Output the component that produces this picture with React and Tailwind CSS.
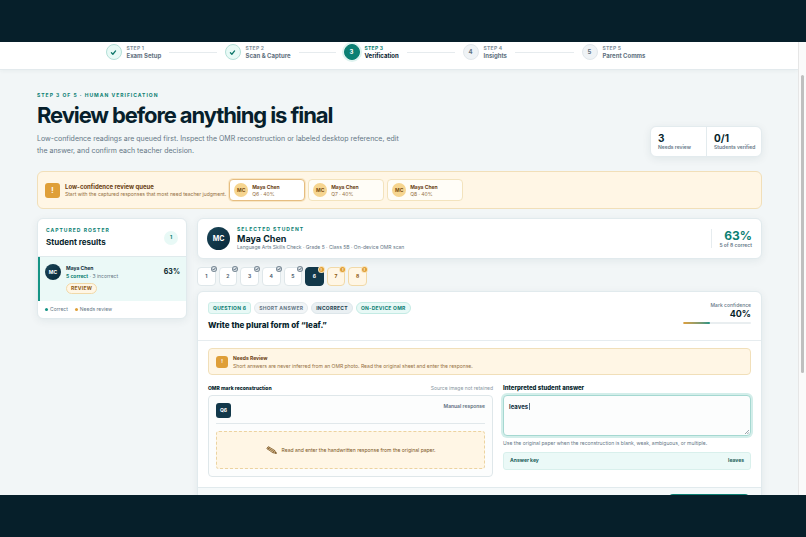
import { useState } from 'react';

const steps = [
  { id: 1, label: 'Exam Setup', state: 'done' },
  { id: 2, label: 'Scan & Capture', state: 'done' },
  { id: 3, label: 'Verification', state: 'active' },
  { id: 4, label: 'Insights', state: 'todo' },
  { id: 5, label: 'Parent Comms', state: 'todo' },
];

const stepCircle = {
  done: 'bg-[#e8faf6] border-[#b4e0d8] text-[#0b7568]',
  active: 'bg-[#0c7f73] border-[#0c7f73] text-white ring-2 ring-[#dff3f0]',
  todo: 'bg-[#eff3f6] border-[#e1e7eb] text-[#5f7180]',
};

const queue = [
  { id: 6, name: 'Maya Chen', meta: 'Q6 · 40%' },
  { id: 7, name: 'Maya Chen', meta: 'Q7 · 40%' },
  { id: 8, name: 'Maya Chen', meta: 'Q8 · 40%' },
];

const questions = [1, 2, 3, 4, 5, 6, 7, 8];

function Check({ className }) {
  return (
    <svg viewBox="0 0 10 10" className={className} fill="none" stroke="currentColor" strokeWidth="1.8" strokeLinecap="round" strokeLinejoin="round">
      <path d="M2 5.4 4.1 7.5 8 2.8" />
    </svg>
  );
}

function Pencil({ className }) {
  return (
    <svg viewBox="0 0 22 16" className={className} fill="none" stroke="currentColor" strokeWidth="1.4" strokeLinejoin="round">
      <path d="M1.5 5.2 4.6 1.2 17.2 8.6 20.6 14.6 13.8 13.6Z" fill="#d9c096" />
      <path d="M3 3.4 15.6 11M13.8 13.6 17.2 8.6M4 6.8 7 2.6" />
      <path d="m18.4 14.3 1.2-1.6 1 1.9Z" fill="currentColor" />
    </svg>
  );
}

function StepNav() {
  return (
    <nav className="bg-white border-b border-[#e3eaed] pt-[2px] pb-[9px] pl-2 shadow-[0_1px_4px_rgba(15,50,65,0.05)]">
      <ol className="grid grid-cols-5 w-full max-w-[595px] mx-auto">
        {steps.map((s, i) => (
          <li key={s.id} className="flex items-center">
            <span className={`w-4 h-4 shrink-0 rounded-full border flex items-center justify-center text-[6px] leading-none font-bold ${stepCircle[s.state]}`}>
              {s.state === 'done' ? <Check className="w-[7px] h-[7px]" /> : s.id}
            </span>
            <span className="ml-[5px] whitespace-nowrap">
              <span className={`block text-[5px] leading-[7px] font-bold tracking-wider ${s.state === 'active' ? 'text-[#0c7f73]' : 'text-[#7f8f9b]'}`}>STEP {s.id}</span>
              <span className={`block text-[6px] leading-[8px] font-bold ${s.state === 'active' ? 'text-[#0a2230]' : 'text-[#5f7180]'}`}>{s.label}</span>
            </span>
            {i < steps.length - 1 && <span className="flex-1 h-px mx-2 bg-[#e6ebee]" />}
          </li>
        ))}
      </ol>
    </nav>
  );
}

function PageHeading() {
  return (
    <header className="flex items-end justify-between">
      <div>
        <p className="text-[5px] leading-[8px] font-bold tracking-[1px] text-[#0c7f73]">STEP 3 OF 5 · HUMAN VERIFICATION</p>
        <h1 className="mt-[2px] text-[22px] leading-[28px] font-bold tracking-tighter text-[#071f2c]">Review before anything is final</h1>
        <p className="mt-[4px] max-w-[370px] text-[7px] leading-[12px] text-[#657786]">
          Low-confidence readings are queued first. Inspect the OMR reconstruction or labeled desktop reference, edit the answer, and confirm each teacher decision.
        </p>
      </div>
      <dl className="w-28 grid grid-cols-2 bg-white border border-[#e3ebee] rounded-md shadow-[0_2px_8px_rgba(15,50,65,0.08)] whitespace-nowrap">
        <div className="flex flex-col-reverse pl-[7px] py-[5px]">
          <dt className="text-[5px] leading-[7px] font-semibold text-[#657786]">Needs review</dt>
          <dd className="text-[10px] leading-[12px] font-bold text-[#071f2c]">3</dd>
        </div>
        <div className="flex flex-col-reverse pl-[7px] py-[5px] border-l border-[#e3ebee]">
          <dt className="text-[5px] leading-[7px] font-semibold text-[#657786]">Students verified</dt>
          <dd className="text-[10px] leading-[12px] font-bold text-[#071f2c]">0/1</dd>
        </div>
      </dl>
    </header>
  );
}

function ReviewQueue({ active, onSelect }) {
  return (
    <section className="mt-[14px] flex items-center px-[7px] py-[7px] rounded-md border border-[#f1dfb9] bg-[#fff6e5]">
      <span className="w-[15px] h-[15px] shrink-0 rounded-[3px] bg-[#df9f38] text-white text-[7px] font-bold leading-none flex items-center justify-center">!</span>
      <div className="ml-[5px] mr-[3px] whitespace-nowrap">
        <h2 className="text-[6px] leading-[8px] font-bold text-[#6b4114]">Low-confidence review queue</h2>
        <p className="text-[5px] leading-[6px] text-[#94703f]">Start with the captured responses that most need teacher judgment.</p>
      </div>
      <div className="flex gap-[3px]">
        {queue.map((q) => (
          <button
            key={q.id}
            type="button"
            onClick={() => onSelect(q.id)}
            className={`w-[76px] flex items-center gap-[4px] px-1 py-[3px] rounded-[4px] border text-left ${active === q.id ? 'bg-white border-[#e6bd80] ring-1 ring-[#f8e6c4]' : 'bg-[#fffdf7] border-[#f3e3bd]'}`}
          >
            <span className="w-[14px] h-[14px] rounded-full bg-[#f6d590] text-[#7a5014] text-[5px] leading-none font-bold flex items-center justify-center">MC</span>
            <span>
              <span className="block text-[5px] leading-[8px] font-bold text-[#6b4114]">{q.name}</span>
              <span className="block text-[5px] leading-[6px] text-[#94703f]">{q.meta}</span>
            </span>
          </button>
        ))}
      </div>
    </section>
  );
}

function Roster() {
  return (
    <aside className="bg-white border border-[#e1eaed] rounded-md overflow-hidden shadow-[0_2px_8px_rgba(15,50,65,0.07)]">
      <div className="flex items-center justify-between px-2 py-[7px] border-b border-[#dfeaec]">
        <div>
          <p className="text-[5px] leading-[9px] font-bold tracking-[1px] text-[#0c7f73]">CAPTURED ROSTER</p>
          <h2 className="text-[8px] leading-[14px] font-bold text-[#071f2c]">Student results</h2>
        </div>
        <span className="w-[14px] h-[14px] rounded-full bg-[#e8f9f6] text-[#0c7f73] text-[5px] leading-none font-bold flex items-center justify-center">1</span>
      </div>
      <button type="button" className="w-full flex items-start pl-[5px] pr-[6px] py-[7px] border-l-2 border-[#159384] bg-[#ebf9f7] text-left">
        <span className="w-4 h-4 shrink-0 rounded-full bg-linear-to-br from-[#1b4658] to-[#08283a] text-white text-[5px] leading-none font-bold flex items-center justify-center">MC</span>
        <span className="ml-[5px] flex-1">
          <span className="block text-[5px] leading-[9px] font-bold text-[#12303f]">Maya Chen</span>
          <span className="block text-[5px] leading-[6px] text-[#657786]"><b className="font-bold text-[#0c7f73]">5 correct</b> · 3 incorrect</span>
          <span className="flex w-fit items-center mt-[4px] h-[11px] px-1 rounded-full border border-[#f1d9a8] bg-[#fff6e5] text-[5px] leading-none font-bold tracking-wider text-[#8c5712]">REVIEW</span>
        </span>
        <span className="text-[7px] leading-4 font-bold text-[#071f2c]">63%</span>
      </button>
      <div className="flex gap-[7px] px-[7px] py-[5px] text-[5px] leading-[7px] text-[#657786]">
        <span className="flex items-center gap-[2px]"><i className="w-[3px] h-[3px] rounded-full bg-[#159384]" />Correct</span>
        <span className="flex items-center gap-[2px]"><i className="w-[3px] h-[3px] rounded-full bg-[#df9f38]" />Needs review</span>
      </div>
    </aside>
  );
}

function StudentCard() {
  return (
    <section className="flex items-center px-[9px] py-[7px] bg-white border border-[#e1eaed] rounded-md shadow-[0_2px_8px_rgba(15,50,65,0.07)]">
      <span className="w-[23px] h-[23px] rounded-full bg-linear-to-br from-[#1b4658] to-[#08283a] text-white text-[7px] leading-none font-bold flex items-center justify-center">MC</span>
      <div className="ml-[7px] flex-1">
        <p className="text-[5px] leading-[7px] font-bold tracking-[1px] text-[#0c7f73]">SELECTED STUDENT</p>
        <h2 className="text-[9px] leading-[11px] font-bold text-[#071f2c]">Maya Chen</h2>
        <p className="text-[5px] leading-[7px] text-[#657786]">Language Arts Skills Check · Grade 5 · Class 5B · On-device OMR scan</p>
      </div>
      <div className="pl-[7px] border-l border-[#e6ecef] text-right">
        <p className="text-[12px] leading-[13px] font-bold text-[#0c7f73]">63%</p>
        <p className="text-[5px] leading-[6px] font-semibold text-[#657786]">5 of 8 correct</p>
      </div>
    </section>
  );
}

function QuestionTabs({ active, onSelect }) {
  const tone = (n) => {
    if (n === active) return 'bg-[#12384a] border-[#12384a] text-white';
    if (n > 5) return 'bg-[#fff6e5] border-[#f1d9a8] text-[#8c5712]';
    return 'bg-white border-[#dfe7ea] text-[#4f6271]';
  };
  return (
    <div className="mt-2 grid grid-cols-8 gap-[3px] w-full max-w-[170px]">
      {questions.map((n) => (
        <button key={n} type="button" onClick={() => onSelect(n)} className={`relative h-[19px] rounded-[4px] border text-[5px] leading-none font-bold ${tone(n)}`}>
          {n}
          {n > 5 ? (
            <span className="absolute -top-px -right-px w-[5px] h-[5px] rounded-full bg-[#df9f38] ring-1 ring-[#fbe3b6] text-white text-[4px] leading-[5px] text-center">!</span>
          ) : (
            <span className="absolute -top-px -right-px w-[4px] h-[4px] rounded-full bg-[#dfe6ea] ring-1 ring-[#7b8b97] text-[#33495a] flex items-center justify-center">
              <Check className="w-[4px] h-[4px]" />
            </span>
          )}
        </button>
      ))}
    </div>
  );
}

function QuestionPanel({ number }) {
  const [answer, setAnswer] = useState('leaves');
  const pill = 'inline-flex items-center h-[12px] px-1 border text-[5px] leading-none font-bold tracking-wider whitespace-nowrap';
  return (
    <section className="mt-[5px] bg-white border border-[#e1eaed] rounded-md overflow-hidden shadow-[0_2px_8px_rgba(15,50,65,0.07)]">
      <div className="flex items-start justify-between px-[10px] pt-[10px] pb-2 border-b border-[#e6ecef]">
        <div>
          <div className="flex gap-[3px]">
            <span className={`${pill} rounded-[3px] bg-[#e8f9f6] border-[#cdeee8] text-[#0c7f73]`}>QUESTION {number}</span>
            <span className={`${pill} rounded-full bg-[#f2f5f7] border-[#e3e9ec] text-[#657786]`}>SHORT ANSWER</span>
            <span className={`${pill} rounded-full bg-[#eaf0f3] border-[#dde6ea] text-[#233f50]`}>INCORRECT</span>
            <span className={`${pill} rounded-full bg-[#e8f9f6] border-[#c4ebe4] text-[#0c7f73]`}>ON-DEVICE OMR</span>
          </div>
          <h2 className="mt-[5px] text-[8px] leading-[13px] font-extrabold text-[#071f2c]">Write the plural form of “leaf.”</h2>
        </div>
        <div className="w-[68px] text-right">
          <p className="text-[5px] leading-[6px] font-medium text-[#657786]">Mark confidence</p>
          <p className="text-[9px] leading-[12px] font-bold text-[#071f2c]">40%</p>
          <div className="mt-[2px] h-[2px] rounded-full bg-[#e9eef0] overflow-hidden">
            <div className="h-full w-2/5 rounded-full bg-linear-to-r from-[#df9f38] to-[#159384]" />
          </div>
        </div>
      </div>

      <div className="px-[10px] pt-[7px] pb-[10px]">
        <div className="flex items-center px-[7px] py-[5px] rounded-[4px] border border-[#f1dfb9] bg-[#fff6e5]">
          <span className="w-[12px] h-[12px] rounded-[3px] bg-[#df9f38] text-white text-[5px] leading-none font-bold flex items-center justify-center">!</span>
          <div className="ml-[5px]">
            <p className="text-[5px] leading-[9px] font-bold text-[#6b4114]">Needs Review</p>
            <p className="text-[5px] leading-[6px] text-[#94703f]">Short answers are never inferred from an OMR photo. Read the original sheet and enter the response.</p>
          </div>
        </div>

        <div className="mt-[9px] grid grid-cols-[1.15fr_1fr] gap-[10px]">
          <div>
            <div className="flex items-center justify-between leading-[8px]">
              <h3 className="text-[5px] font-extrabold text-[#071f2c]">OMR mark reconstruction</h3>
              <span className="text-[5px] text-[#8896a1]">Source image not retained</span>
            </div>
            <div className="mt-[3px] px-[7px] py-[7px] rounded-[4px] border border-[#dfe7ea] bg-[#fcfdfd]">
              <div className="flex items-start justify-between pb-[5px] border-b border-[#e1e8eb]">
                <span className="w-[15px] h-[15px] rounded-[3px] bg-[#12384a] text-white text-[5px] leading-none font-bold flex items-center justify-center">Q6</span>
                <span className="text-[5px] leading-[7px] font-semibold text-[#5f7180]">Manual response</span>
              </div>
              <div className="mt-[7px] h-[38px] flex items-center justify-center gap-[5px] rounded-[3px] border border-dashed border-[#ecd3a0] bg-[#fff6e5] text-[#7a5524]">
                <Pencil className="w-[11px] h-[8px]" />
                <p className="text-[5px] leading-[7px]">Read and enter the handwritten response from the original paper.</p>
              </div>
            </div>
          </div>

          <div>
            <label htmlFor="answer" className="block text-[6px] leading-[8px] font-extrabold text-[#071f2c]">Interpreted student answer</label>
            <div className="relative mt-[3px]">
              <textarea
                id="answer"
                value={answer}
                onChange={(e) => setAnswer(e.target.value)}
                className="block w-full h-[41px] px-[5px] py-[6px] rounded-[4px] border border-[#a5d8d1] ring-2 ring-[#d3eeea] bg-[#fcfdfd] outline-none resize-none text-[6px] leading-[9px] font-bold text-[#12303f]"
              />
              {/* caret and grip */}
              <span className="absolute left-[26px] top-[8px] w-px h-[7px] bg-[#5f7180] pointer-events-none" />
              <svg viewBox="0 0 8 8" className="absolute right-[2px] bottom-[2px] w-1 h-1 pointer-events-none" stroke="#6f7d86" strokeWidth="1.4">
                <path d="M0 8 8 0M4.5 8 8 4.5" />
              </svg>
            </div>
            <p className="mt-[3px] text-[5px] leading-[8px] text-[#657786]">Use the original paper when the reconstruction is blank, weak, ambiguous, or multiple.</p>
            <div className="mt-[5px] flex items-center justify-between px-[6px] h-[18px] rounded-[3px] border border-[#d9f0ec] bg-[#ebf9f7] text-[5px] font-bold text-[#1c5f5a]">
              <span>Answer key</span>
              <span>leaves</span>
            </div>
          </div>
        </div>
      </div>

      <div className="flex justify-end px-[12px] pt-[6px] pb-2 border-t border-[#e1eaed] bg-[#f5f9fa]">
        <button type="button" aria-label="Confirm" className="w-[80px] h-[17px] rounded-[4px] bg-[#0c7f73]" />
      </div>
    </section>
  );
}

export default function App() {
  const [active, setActive] = useState(6);

  return (
    <div className="h-screen py-[42px] bg-[#061f2a] font-['Inter',sans-serif]">
      <div className="h-full flex overflow-hidden bg-[#f2f6f7]">
        <div className="flex-1 min-w-0 overflow-hidden">
          <StepNav />
          <main className="pl-[37px] pr-9 pt-[21px]">
            <PageHeading />
            <ReviewQueue active={active} onSelect={setActive} />
            <div className="mt-[9px] grid grid-cols-[150px_1fr] items-start gap-[10px]">
              <Roster />
              <div>
                <StudentCard />
                <QuestionTabs active={active} onSelect={setActive} />
                <QuestionPanel number={active} />
              </div>
            </div>
          </main>
        </div>
        {/* Scroll track */}
        <div className="w-2 shrink-0 border-l border-[#e6e6e6] bg-[#fafafa] pt-[33px] px-[2px]">
          <div className="h-[71%] rounded-full bg-[#bfbfbf]" />
        </div>
      </div>
    </div>
  );
}
